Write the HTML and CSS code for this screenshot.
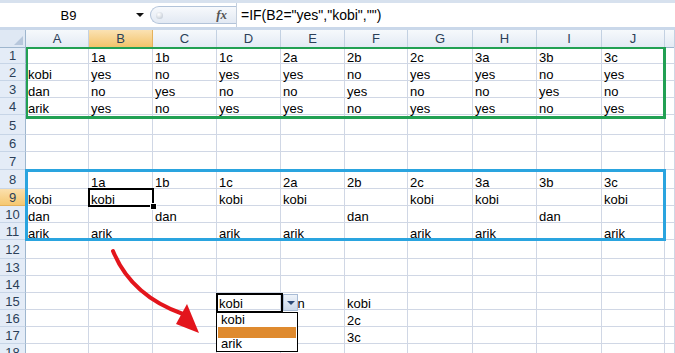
FILE: index.html
```html
<html>
<head>
<link rel="stylesheet" href="styles.css">
</head>
<body>
<div class="page">

<div class="formula-bar">
<div class="name-box">B9</div>
<div class="name-drop"><span class="tri"></span></div>
<div class="fx-pill"><span class="grip"></span><span class="fx">fx</span></div>
<div class="formula">=IF(B2="yes","kobi","")</div>
</div>

<div class="sheet">
<div class="row head"><div class="corner"></div><div class="col">A</div><div class="col sel">B</div><div class="col">C</div><div class="col">D</div><div class="col">E</div><div class="col">F</div><div class="col">G</div><div class="col">H</div><div class="col">I</div><div class="col">J</div><div class="col"></div></div>

<div class="row h17"><div class="rh">1</div><div class="c"></div><div class="c">1a</div><div class="c">1b</div><div class="c">1c</div><div class="c">2a</div><div class="c">2b</div><div class="c">2c</div><div class="c">3a</div><div class="c">3b</div><div class="c">3c</div><div class="c"></div></div>
<div class="row h17"><div class="rh">2</div><div class="c">kobi</div><div class="c">yes</div><div class="c">no</div><div class="c">yes</div><div class="c">yes</div><div class="c">no</div><div class="c">yes</div><div class="c">yes</div><div class="c">no</div><div class="c">yes</div><div class="c"></div></div>
<div class="row h17"><div class="rh">3</div><div class="c">dan</div><div class="c">no</div><div class="c">yes</div><div class="c">no</div><div class="c">no</div><div class="c">yes</div><div class="c">no</div><div class="c">no</div><div class="c">yes</div><div class="c">no</div><div class="c"></div></div>
<div class="row h17"><div class="rh">4</div><div class="c">arik</div><div class="c">yes</div><div class="c">no</div><div class="c">yes</div><div class="c">yes</div><div class="c">no</div><div class="c">yes</div><div class="c">yes</div><div class="c">no</div><div class="c">yes</div><div class="c"></div></div>
<div class="row h20"><div class="rh">5</div><div class="c"></div><div class="c"></div><div class="c"></div><div class="c"></div><div class="c"></div><div class="c"></div><div class="c"></div><div class="c"></div><div class="c"></div><div class="c"></div><div class="c"></div></div>
<div class="row h17"><div class="rh">6</div><div class="c"></div><div class="c"></div><div class="c"></div><div class="c"></div><div class="c"></div><div class="c"></div><div class="c"></div><div class="c"></div><div class="c"></div><div class="c"></div><div class="c"></div></div>
<div class="row h18"><div class="rh">7</div><div class="c"></div><div class="c"></div><div class="c"></div><div class="c"></div><div class="c"></div><div class="c"></div><div class="c"></div><div class="c"></div><div class="c"></div><div class="c"></div><div class="c"></div></div>
<div class="row h19"><div class="rh">8</div><div class="c"></div><div class="c">1a</div><div class="c">1b</div><div class="c">1c</div><div class="c">2a</div><div class="c">2b</div><div class="c">2c</div><div class="c">3a</div><div class="c">3b</div><div class="c">3c</div><div class="c"></div></div>
<div class="row h17"><div class="rh sel">9</div><div class="c">kobi</div><div class="c">kobi</div><div class="c"></div><div class="c">kobi</div><div class="c">kobi</div><div class="c"></div><div class="c">kobi</div><div class="c">kobi</div><div class="c"></div><div class="c">kobi</div><div class="c"></div></div>
<div class="row h17"><div class="rh">10</div><div class="c">dan</div><div class="c"></div><div class="c">dan</div><div class="c"></div><div class="c"></div><div class="c">dan</div><div class="c"></div><div class="c"></div><div class="c">dan</div><div class="c"></div><div class="c"></div></div>
<div class="row h17"><div class="rh">11</div><div class="c">arik</div><div class="c">arik</div><div class="c"></div><div class="c">arik</div><div class="c">arik</div><div class="c"></div><div class="c">arik</div><div class="c">arik</div><div class="c"></div><div class="c">arik</div><div class="c"></div></div>
<div class="row h19"><div class="rh">12</div><div class="c"></div><div class="c"></div><div class="c"></div><div class="c"></div><div class="c"></div><div class="c"></div><div class="c"></div><div class="c"></div><div class="c"></div><div class="c"></div><div class="c"></div></div>
<div class="row h17"><div class="rh">13</div><div class="c"></div><div class="c"></div><div class="c"></div><div class="c"></div><div class="c"></div><div class="c"></div><div class="c"></div><div class="c"></div><div class="c"></div><div class="c"></div><div class="c"></div></div>
<div class="row h17"><div class="rh">14</div><div class="c"></div><div class="c"></div><div class="c"></div><div class="c"></div><div class="c"></div><div class="c"></div><div class="c"></div><div class="c"></div><div class="c"></div><div class="c"></div><div class="c"></div></div>
<div class="row h17"><div class="rh">15</div><div class="c"></div><div class="c"></div><div class="c"></div><div class="c">kobi</div><div class="c">dan</div><div class="c">kobi</div><div class="c"></div><div class="c"></div><div class="c"></div><div class="c"></div><div class="c"></div></div>
<div class="row h17"><div class="rh">16</div><div class="c"></div><div class="c"></div><div class="c"></div><div class="c"></div><div class="c"></div><div class="c">2c</div><div class="c"></div><div class="c"></div><div class="c"></div><div class="c"></div><div class="c"></div></div>
<div class="row h17"><div class="rh">17</div><div class="c"></div><div class="c"></div><div class="c"></div><div class="c"></div><div class="c"></div><div class="c">3c</div><div class="c"></div><div class="c"></div><div class="c"></div><div class="c"></div><div class="c"></div></div>
<div class="row h17"><div class="rh">18</div><div class="c"></div><div class="c"></div><div class="c"></div><div class="c"></div><div class="c"></div><div class="c"></div><div class="c"></div><div class="c"></div><div class="c"></div><div class="c"></div><div class="c"></div></div>
</div>

<!-- overlays -->
<div class="range-green"></div>
<div class="range-blue"></div>
<div class="active-cell"><span class="handle"></span></div>
<div class="list-cell"></div>
<div class="list-btn"><span class="tri"></span></div>
<div class="list-box">
<div class="item">kobi</div>
<div class="item hot"></div>
<div class="item">arik</div>
</div>
<svg class="arrow" width="675" height="353" viewBox="0 0 675 353">
<path d="M113 251 C 124 278, 146 301, 183 314" fill="none" stroke="#e3151c" stroke-width="4" stroke-linecap="round"/>
<polygon points="187,304 176,324 199,333" fill="#e3151c"/>
</svg>

</div>
</body>
</html>
```
FILE: styles.css
```css
body{
margin:0; overflow:hidden; background:#fff; font-family:"Liberation Sans", Arial, sans-serif; font-size:13px; color:#000;
}
.page{
position:relative; width:675px; height:353px; overflow:hidden;
}

/* formula bar */
.formula-bar{
display:flex; align-items:center; height:24px; background:#fff; border-top:3px solid #d7e1ee; border-bottom:3px solid #cad8ea;
}
.name-box{
width:137px; text-align:center; font-size:13px;
}
.name-drop{
width:13px; height:24px; display:flex; align-items:center; justify-content:center; margin-left:-4px; margin-right:4px;
}
.name-drop .tri, .list-btn .tri{
width:0; height:0; border-left:4px solid transparent; border-right:4px solid transparent; border-top:4px solid #111;
}
.fx-pill{
width:86px; height:18px; box-sizing:border-box; display:flex; align-items:center; justify-content:space-between;
border:1px solid #b2c3d9; border-right:none; border-radius:10px 0 0 10px; background:linear-gradient(#f7f9fc, #e2e9f3);
}
.grip{
width:7px; height:7px; margin-left:5px; border-radius:50%; background:radial-gradient(circle at 40% 35%, #fff, #b5bfcc);
}
.fx{
font-family:"Liberation Serif", serif; font-style:italic; font-weight:bold; font-size:13px; color:#555; margin-right:9px;
}
.formula{
flex:1; height:24px; line-height:24px; border-left:1px solid #c4cfdd; padding-left:4px; font-size:14px;
}

/* grid */
.row{
display:grid; grid-template-columns:26px 63px 64px 64px 64px 64px 63px 65px 64px 65px 63px 1fr;
}
.head{ height:17px; }
.h17{ height:17px; }
.h18{ height:18px; }
.h19{ height:19px; }
.h20{ height:20px; }
.corner{
background:#dfe8f4; border-right:1px solid #9eb6ce; border-bottom:1px solid #9eb6ce; position:relative;
}
.corner:after{
content:""; position:absolute; right:2px; bottom:2px; border-left:9px solid transparent; border-bottom:9px solid #b7c7dc;
}
.col{
box-sizing:border-box; background:linear-gradient(#f6f9fc, #e3eaf4); border-right:1px solid #c3d1e2; border-bottom:1px solid #9eb6ce;
text-align:center; line-height:17px; color:#2b3f58;
}
.col.sel{
background:linear-gradient(#fbe2b3, #f3c36a); border-right-color:#e5b25c; border-bottom-color:#f0a63d;
}
.rh{
box-sizing:border-box; background:#e4ecf7; border-right:1px solid #9eb6ce; border-bottom:1px solid #c7d5e7;
display:flex; align-items:center; justify-content:center; padding-top:1px; color:#2b3f58; font-size:13px;
}
.rh.sel{
background:linear-gradient(#fbe0ad, #f5c871); border-bottom-color:#e5b25c;
}
.c{
box-sizing:border-box; border-right:1px solid #d0d7e5; border-bottom:1px solid #d0d7e5;
display:flex; align-items:flex-end; padding-left:2px; line-height:11px; white-space:nowrap;
}

/* overlays */
.range-green{
position:absolute; left:26px; top:47px; width:640px; height:72px; box-sizing:border-box;
border:solid #22a053; border-width:2px 3px 3px 2px;
}
.range-blue{
position:absolute; left:25px; top:169px; width:641px; height:72px; box-sizing:border-box; border:3px solid #2aa4df;
}
.active-cell{
position:absolute; left:88px; top:188px; width:66px; height:19px; box-sizing:border-box; border:2px solid #000;
}
.handle{
position:absolute; right:-5px; bottom:-5px; width:5px; height:5px; background:#000; border:1px solid #fff;
}
.list-cell{
position:absolute; left:216px; top:293px; width:67px; height:20px; box-sizing:border-box; border:2px solid #000;
}
.list-btn{
position:absolute; left:283px; top:294px; width:15px; height:17px; box-sizing:border-box;
border:1px solid #a8bbd5; background:linear-gradient(#eef3fa, #cbd8ea); display:flex; align-items:center; justify-content:center;
}
.list-btn .tri{
border-top-color:#2d4a78;
}
.list-box{
position:absolute; left:216px; top:312px; width:82px; height:40px; box-sizing:border-box; background:#fff; border:1px solid #000; padding:1px;
}
.item{
height:12px; line-height:12px; padding-left:3px; font-size:13px;
}
.item.hot{
background:#df8a2e; height:11px; margin-top:1px;
}
.arrow{
position:absolute; left:0; top:0;
}
```
